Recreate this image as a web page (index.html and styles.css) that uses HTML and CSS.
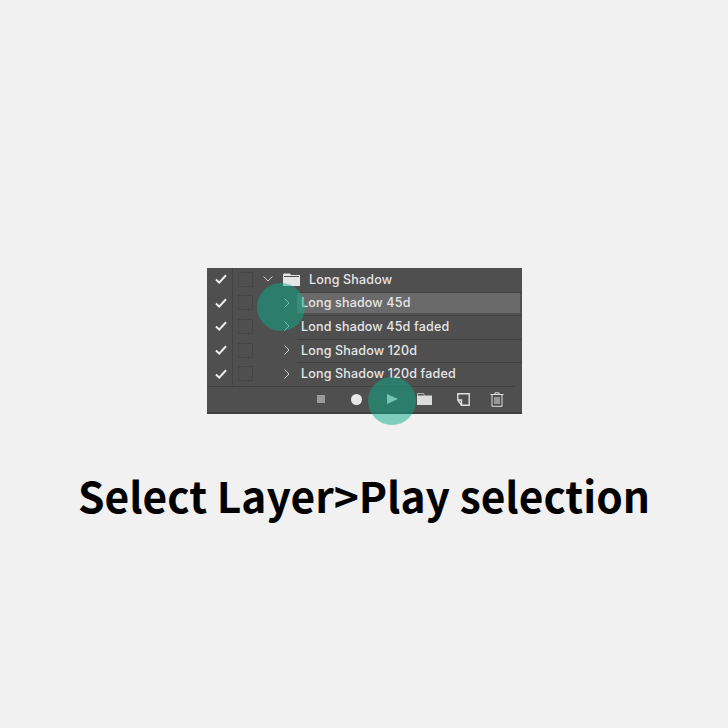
FILE: index.html
```html
<!DOCTYPE html>
<html lang="en">
<head>
    <meta charset="UTF-8">
    <title>Select Layer</title>
    <link rel="stylesheet" href="styles.css">
</head>
<body>
    <main class="slide">
        <div class="panel">
            <div class="row">
                <div class="check-col"><svg class="check" viewBox="0 0 12 10"><path d="M1 5.5 4.2 8.6 11 1.2"/></svg></div>
                <div class="box-col"><span class="box"></span></div>
                <svg class="chevron-down" viewBox="0 0 10 6"><path d="M.5.5 5 5 9.5.5"/></svg>
                <svg class="folder" viewBox="0 0 17 13"><path class="folder-fill" d="M0 1.5 1 .5H7L8 2H17V13H0Z"/><path class="folder-line" d="M1 3.5H16"/></svg>
                <span class="label">Long Shadow</span>
            </div>
            <div class="row row-line">
                <div class="check-col"><svg class="check" viewBox="0 0 12 10"><path d="M1 5.5 4.2 8.6 11 1.2"/></svg></div>
                <div class="box-col"><span class="box"></span></div>
                <svg class="chevron" viewBox="0 0 6 10"><path d="M.5.5 5 5 .5 9.5"/></svg>
                <span class="label selected">Long shadow 45d</span>
            </div>
            <div class="row row-line">
                <div class="check-col"><svg class="check" viewBox="0 0 12 10"><path d="M1 5.5 4.2 8.6 11 1.2"/></svg></div>
                <div class="box-col"><span class="box"></span></div>
                <svg class="chevron" viewBox="0 0 6 10"><path d="M.5.5 5 5 .5 9.5"/></svg>
                <span class="label label-layer">Lond shadow 45d faded</span>
            </div>
            <div class="row row-line">
                <div class="check-col"><svg class="check" viewBox="0 0 12 10"><path d="M1 5.5 4.2 8.6 11 1.2"/></svg></div>
                <div class="box-col"><span class="box"></span></div>
                <svg class="chevron" viewBox="0 0 6 10"><path d="M.5.5 5 5 .5 9.5"/></svg>
                <span class="label label-layer">Long Shadow 120d</span>
            </div>
            <div class="row row-line">
                <div class="check-col"><svg class="check" viewBox="0 0 12 10"><path d="M1 5.5 4.2 8.6 11 1.2"/></svg></div>
                <div class="box-col"><span class="box"></span></div>
                <svg class="chevron" viewBox="0 0 6 10"><path d="M.5.5 5 5 .5 9.5"/></svg>
                <span class="label label-layer">Long Shadow 120d faded</span>
            </div>
            <div class="toolbar">
                <span class="stop"></span>
                <span class="record"></span>
                <span class="play"></span>
                <svg class="tool-folder" viewBox="0 0 15 12"><path class="tool-folder-tab" d="M.5 2.5V.5H6.5L7.5 2.5"/><path d="M0 2.5H15V12H0Z"/></svg>
                <svg class="tool-new" viewBox="0 0 13 13"><path d="M.8.8H12.2V12.2H4.5L.8 7ZM.8 7H4.5V12.2"/></svg>
                <svg class="tool-trash" viewBox="0 0 14 15"><path d="M.5 2.5H13.5M5 2.5V.8H9V2.5M2 2.5V14.3H12V2.5M5 5V12M7 5V12M9 5V12"/></svg>
            </div>
            <span class="spot spot-layer"></span>
            <span class="spot spot-play"></span>
        </div>
        <h1 class="caption">Select Layer&gt;Play selection</h1>
    </main>
</body>
</html>
```

FILE: styles.css
```css
body {
    margin: 0;
    background-color: #f1f1f1;
    font-family: Inter, "Liberation Sans", Arial, sans-serif;
}

.slide {
    height: 728px;
    padding-top: 268px;
    box-sizing: border-box;
    overflow: hidden;
}

.panel {
    position: relative;
    width: 315px;
    height: 144px;
    margin-left: 207px;
    background-color: #4f4f4f;
    border-bottom: 2px solid #3f3f3f;
}

.row {
    display: flex;
    align-items: center;
    height: 23.6px;
    padding-bottom: 1px;
    box-sizing: border-box;
    position: relative;
}

.row-line::before {
    content: "";
    position: absolute;
    left: 90px;
    right: 0;
    top: 0;
    height: 1px;
    background-color: #414141;
}

.check-col {
    flex: none;
    display: flex;
    justify-content: center;
    align-items: center;
    width: 26px;
    height: 23.6px;
    padding-left: 3px;
    border-right: 1px solid #434343;
    box-sizing: border-box;
}

.check {
    width: 12px;
    height: 10px;
    fill: none;
    stroke: #eeeeee;
    stroke-width: 2;
}

.box-col {
    flex: none;
    display: flex;
    align-items: center;
    padding-left: 5px;
    width: 27px;
    box-sizing: border-box;
}

.box {
    flex: none;
    width: 15px;
    height: 15px;
    border: 1px solid #454545;
    box-sizing: border-box;
}

.chevron-down {
    flex: none;
    width: 10px;
    height: 6px;
    margin-left: 3px;
    fill: none;
    stroke: #d0d0d0;
}

.chevron {
    flex: none;
    width: 6px;
    height: 10px;
    margin-left: 24px;
    fill: none;
    stroke: #d0d0d0;
}

.folder {
    flex: none;
    width: 17px;
    height: 13px;
    margin-left: 10px;
}

.folder-fill {
    fill: #e6e6e6;
}

.folder-line {
    stroke: #4f4f4f;
    fill: none;
}

.label {
    color: #e6e6e6;
    font-size: 12.5px;
    font-weight: 500;
    letter-spacing: 0.17px;
    white-space: nowrap;
    margin-left: 9px;
}

.label-layer {
    margin-left: 11px;
}

.selected {
    flex: none;
    width: 219px;
    height: 21px;
    line-height: 21px;
    margin-left: 7px;
    padding-left: 4px;
    background-color: #6a6a6a;
}

.toolbar {
    display: flex;
    align-items: center;
    height: 26px;
    border-top: 1px solid #414141;
    margin-right: 7px;
    box-sizing: border-box;
    padding-left: 110px;
}

.stop {
    flex: none;
    width: 8px;
    height: 8px;
    background-color: #9a9a9a;
}

.record {
    flex: none;
    width: 11px;
    height: 11px;
    margin-left: 26px;
    border-radius: 50%;
    background-color: #e8e8e8;
}

.play {
    flex: none;
    width: 0;
    height: 0;
    margin-left: 25px;
    border-left: 11px solid #e0e0e0;
    border-top: 5.5px solid transparent;
    border-bottom: 5.5px solid transparent;
}

.tool-folder {
    flex: none;
    width: 15px;
    height: 12px;
    margin-left: 19px;
    fill: #dcdcdc;
}

.tool-folder-tab {
    fill: none;
    stroke: #b8b8b8;
}

.tool-new {
    flex: none;
    width: 13px;
    height: 13px;
    margin-left: 25px;
    fill: none;
    stroke: #e0e0e0;
    stroke-width: 1.4;
}

.tool-trash {
    flex: none;
    width: 14px;
    height: 15px;
    margin-left: 20px;
    fill: none;
    stroke: #e0e0e0;
}

.spot {
    position: absolute;
    width: 48px;
    height: 48px;
    border-radius: 50%;
    background-color: rgba(11, 171, 137, 0.5);
}

.spot-layer {
    left: 50px;
    top: 15px;
}

.spot-play {
    left: 161px;
    top: 109px;
}

.caption {
    margin: 51px 0 0;
    text-align: center;
    font-family: "Noto Sans CJK KR", "Noto Sans", sans-serif;
    font-size: 42.5px;
    font-weight: 700;
    line-height: 60px;
    color: #000;
}
```
